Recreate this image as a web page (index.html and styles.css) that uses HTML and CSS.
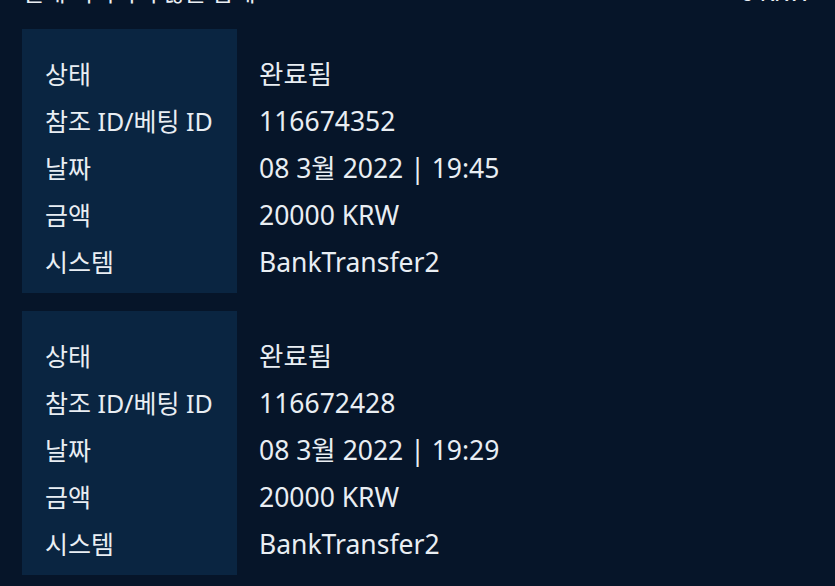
FILE: index.html
```html
<!DOCTYPE html>
<html lang="ko">
<head>
<meta charset="utf-8">
<link rel="stylesheet" href="styles.css">
</head>
<body>
<div class="page">
  <div class="summary">
    <span>현재 처리되지 않은 합계</span>
    <span>0 KRW</span>
  </div>
  <div class="card">
    <div class="label">상태</div><div class="value">완료됨</div>
    <div class="label">참조 ID/베팅 ID</div><div class="value">116674352</div>
    <div class="label">날짜</div><div class="value">08 3월 2022 | 19:45</div>
    <div class="label">금액</div><div class="value">20000 KRW</div>
    <div class="label last">시스템</div><div class="value">BankTransfer2</div>
  </div>
  <div class="card">
    <div class="label">상태</div><div class="value">완료됨</div>
    <div class="label">참조 ID/베팅 ID</div><div class="value">116672428</div>
    <div class="label">날짜</div><div class="value">08 3월 2022 | 19:29</div>
    <div class="label">금액</div><div class="value">20000 KRW</div>
    <div class="label last">시스템</div><div class="value">BankTransfer2</div>
  </div>
</div>
</body>
</html>
```
FILE: styles.css
```css
html, body {
  margin: 0;
  padding: 0;
  background: #061529;
  height: 100%;
  overflow: hidden;
}
.page {
  padding: 0 22px;
  font-family: "Noto Sans", "Noto Sans CJK KR", sans-serif;
  font-size: 25px;
  color: #e9eef3;
}
.summary {
  display: flex;
  justify-content: space-between;
  height: 47px;
  line-height: 47px;
  margin-top: -32px;
  margin-bottom: 14px;
  padding-right: 3px;
  font-size: 24px;
  letter-spacing: -0.5px;
}
.card {
  display: grid;
  grid-template-columns: 215px 1fr;
  margin-bottom: 18px;
}
.label, .value {
  height: 47px;
  line-height: 47px;
  white-space: nowrap;
}
.label {
  background: #0a2541;
  padding-left: 23px;
}
.value {
  padding-left: 22px;
  font-size: 26.5px;
}
.card .label:first-child {
  padding-top: 22px;
}
.card .value:nth-child(2) {
  padding-top: 22px;
}
.card .last {
  padding-bottom: 7px;
}
```
